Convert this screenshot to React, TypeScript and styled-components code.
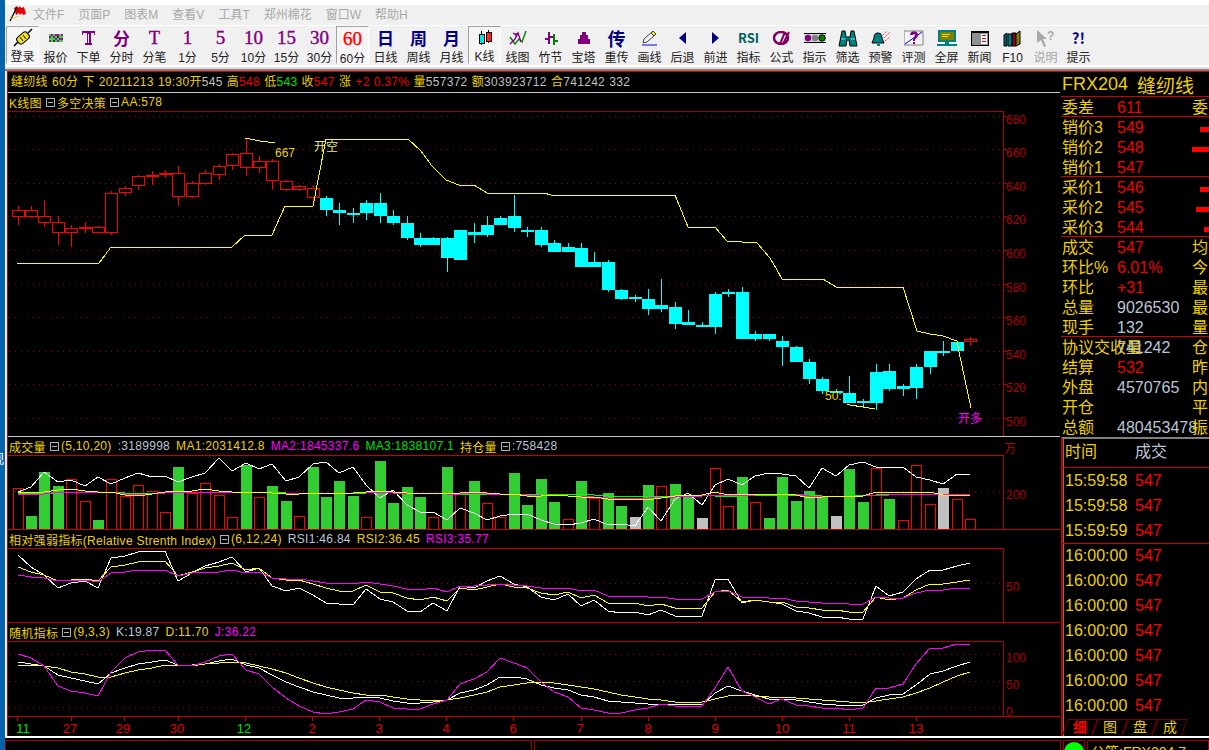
import React from 'react';
import styled, { createGlobalStyle } from 'styled-components';

const YELLOW = '#eed000';
const RED = '#f00000';
const DARK_RED = '#b00000';
const SILVER = '#b9c6d6';
const SANS = `"Liberation Sans", "Noto Sans CJK SC", sans-serif`;

const GlobalStyle = createGlobalStyle`
html, body { margin: 0; padding: 0; background: #0563ad; }
`;

const Page = styled.div`
display: flex;
width: 1209px;
height: 750px;
overflow: hidden;
font-family: ${SANS};
font-size: 12px;
`;

const Desktop = styled.div`
position: relative;
width: 5px;
flex: none;
overflow: hidden;
background: #0563ad;
`;

const DesktopGlyph = styled.span<{ $top: number }>`
position: absolute;
left: -9px;
top: ${p => p.$top}px;
color: #fff;
font-size: 13px;
`;

const Win = styled.div`
flex: 1;
min-width: 0;
display: flex;
flex-direction: column;
background: #f0f0f0;
border-top: 5px solid #fff;
`;

const MenuBar = styled.div`
box-sizing: border-box;
display: flex;
align-items: center;
height: 21px;
padding: 0 0 3px 4px;
gap: 14px;
border-bottom: 1px solid #fff;
`;

const Logo = styled.svg`
width: 18px;
height: 17px;
margin-right: -8px;
`;

const MenuItem = styled.span`
color: #a8a8a8;
white-space: nowrap;
`;

const Toolbar = styled.div`
display: flex;
height: 38px;
padding-left: 1px;
`;

const ToolButton = styled.div<{ $pressed?: boolean }>`
box-sizing: border-box;
width: 33px;
flex: none;
display: flex;
flex-direction: column;
align-items: center;
justify-content: space-between;
overflow: hidden;
${p => p.$pressed && `
border: 1px solid #fff;
border-top-color: #a0a0a0;
border-left-color: #a0a0a0;
background: repeating-conic-gradient(#fff 0 25%, #eeeeee 0 50%) 0 0 / 2px 2px;
`}
`;

const IconSlot = styled.div`
height: 24px;
display: flex;
align-items: center;
justify-content: center;
`;

const ToolGlyph = styled.span<{ $color: string; $serif?: boolean; $size: number }>`
color: ${p => p.$color};
font-family: ${p => (p.$serif ? `"Liberation Serif", serif` : `"Noto Sans CJK SC", sans-serif`)};
font-size: ${p => p.$size}px;
font-weight: ${p => (p.$serif ? 400 : 700)};
${p => p.$serif && `-webkit-text-stroke: 0.4px ${p.$color};`}
line-height: 24px;
white-space: nowrap;
`;

const ToolLabel = styled.span<{ $muted?: boolean }>`
height: 14px;
line-height: 16px;
white-space: nowrap;
color: ${p => (p.$muted ? '#a8a8a8' : '#222')};
`;

const Ruler = styled.div`
height: 7px;
background: linear-gradient(#f0f0f0 0 1px, #fff 1px 3px, #e0e0e0 3px 5px, #808080 5px 7px);
`;

const Body = styled.div`
display: flex;
height: 664px;
margin-left: 2px;
background: #000;
border-top: 1px solid #d00000;
`;

const ChartColumn = styled.div`
box-sizing: border-box;
width: 1054px;
flex: none;
display: flex;
flex-direction: column;
border-left: 1px solid #c00000;
letter-spacing: 0.3px;
`;

const QuoteBar = styled.div`
box-sizing: border-box;
height: 21px;
padding-left: 3px;
line-height: 20px;
white-space: pre;
word-spacing: 0.5px;
border-bottom: 1px solid #c8c8c8;
margin-right: 1px;
`;

const Tint = styled.span<{ $c: string }>`
color: ${p => p.$c};
`;

const IndicatorTitle = styled.div`
display: flex;
align-items: center;
height: 18px;
padding-left: 1px;
white-space: pre;
color: ${YELLOW};
position: relative;
`;

const Gap = styled.span`
width: 6px;
flex: none;
`;

const FoldBox = styled.span`
box-sizing: border-box;
display: inline-flex;
align-items: center;
justify-content: center;
width: 9px;
height: 9px;
margin: 0 2px 0 4px;
border: 1px solid #b0b0b0;
&::after {
  content: '';
  width: 5px;
  height: 1px;
  background: #b0b0b0;
}
`;

const WanLabel = styled.span`
position: absolute;
left: 996px;
top: 2px;
color: ${DARK_RED};
font-size: 12px;
`;

const ChartSvg = styled.svg`
display: block;
flex: none;
shape-rendering: crispEdges;
font-family: ${SANS};
font-size: 12px;
letter-spacing: 0;
`;

const XAxis = styled.div`
position: relative;
height: 18px;
font-size: 13px;
letter-spacing: 0;
`;

const XTick = styled.span<{ $x: number; $green?: boolean }>`
position: absolute;
left: ${p => p.$x - 8}px;
top: 4px;
transform: translateX(-50%);
color: ${p => (p.$green ? '#00e000' : '#e00000')};
`;

const TickMarks = styled.svg`
position: absolute;
left: 0;
top: 0;
shape-rendering: crispEdges;
`;

const SidePanel = styled.div`
flex: 1;
min-width: 0;
display: flex;
flex-direction: column;
`;

const SideHead = styled.div`
box-sizing: border-box;
height: 25px;
padding-left: 1px;
display: flex;
align-items: center;
gap: 9px;
color: ${YELLOW};
font-size: 18px;
white-space: nowrap;
border-bottom: 1px solid #d00000;
`;

const SideHeadName = styled.span`
font-size: 19px;
`;

const RowGroup = styled.div`
box-shadow: inset 0 -1px 0 #d00000;
`;

const QuoteRow = styled.div`
display: grid;
grid-template-columns: 55px 75px 1fr;
height: 20px;
padding-left: 1px;
line-height: 22px;
font-size: 16px;
white-space: nowrap;
overflow: visible;
`;

const QuoteLabel = styled.span`
color: ${YELLOW};
`;

const QuoteValue = styled.span<{ $silver?: boolean }>`
color: ${p => (p.$silver ? SILVER : RED)};
`;

const DepthCell = styled.span`
display: flex;
justify-content: flex-end;
align-items: center;
`;

const DepthBar = styled.i<{ $w: number }>`
display: block;
width: ${p => p.$w}px;
height: 5px;
margin-top: 2px;
background: #ff0000;
`;

const Trades = styled.div`
flex: 1;
min-height: 0;
display: flex;
flex-direction: column;
border-top: 2px solid #808080;
border-left: 2px solid #c00000;
box-shadow: inset 1px 0 0 #707070;
`;

const TradesHead = styled.div`
display: grid;
grid-template-columns: 70px 1fr;
height: 28px;
line-height: 26px;
padding-left: 2px;
font-size: 16px;
border-bottom: 1px solid #d00000;
flex: none;
`;

const TradeGroup = styled.div<{ $line?: boolean }>`
border-bottom: ${p => (p.$line ? '1px solid #d00000' : 'none')};
margin-bottom: ${p => (p.$line ? '-1px' : '0')};
flex: none;
`;

const TradeRow = styled.div`
display: grid;
grid-template-columns: 70px 1fr;
height: 25px;
line-height: 25px;
padding-left: 2px;
font-size: 16px;
`;

const TabStrip = styled.div`
display: flex;
margin-top: auto;
height: 17px;
padding-left: 2px;
flex: none;
`;

const Tab = styled.div<{ $on?: boolean }>`
position: relative;
width: 30px;
height: 16px;
text-align: center;
line-height: 16px;
font-size: 14px;
font-weight: ${p => (p.$on ? 700 : 400)};
color: ${p => (p.$on ? '#ff0000' : YELLOW)};
&::before {
  content: '';
  position: absolute;
  inset: 0 0 0 0;
  border: 1px solid #700000;
  border-bottom: none;
  transform: skewX(-20deg);
}
`;

const WhiteRule = styled.div`
height: 2px;
background: #fff;
`;

const StatusBar = styled.div`
flex: 1;
display: flex;
gap: 2px;
padding: 2px 0 0 0;
background: #000;
overflow: hidden;
`;

const StatusCell = styled.div<{ $w?: number }>`
box-sizing: border-box;
width: ${p => (p.$w ? `${p.$w}px` : 'auto')};
flex: ${p => (p.$w ? 'none' : 1)};
height: 20px;
border: 1px solid #a00000;
color: ${YELLOW};
font-size: 14px;
line-height: 22px;
white-space: nowrap;
display: flex;
justify-content: flex-start;
padding-left: 3px;
`;

const GreenDot = styled.span`
width: 20px;
height: 20px;
margin: 1px 0 0 -3px;
border-radius: 50%;
background: #00ff00;
flex: none;
`;

/* chart data, page pixels: top, bottom, wick top, wick bottom */
const CANDLES: number[][] = [
  [210, 216, 206, 225], [210, 216, 206, 218], [216, 222, 200, 227], [222, 232, 216, 245],
  [228, 232, 225, 247], [227, 227, 222, 233], [227, 232, 226, 233], [193, 232, 191, 235],
  [188, 192, 186, 196], [176, 185, 175, 190], [175, 175, 171, 185], [173, 174, 170, 178],
  [173, 196, 166, 206], [183, 196, 181, 198], [173, 183, 170, 185], [166, 174, 164, 180],
  [154, 165, 153, 170], [153, 167, 138, 176], [161, 167, 156, 173], [161, 180, 159, 190],
  [181, 189, 180, 191], [186, 189, 185, 191], [188, 197, 185, 205], [198, 210, 196, 216],
  [210, 213, 203, 225], [213, 215, 208, 223], [203, 213, 200, 220], [203, 216, 193, 223],
  [216, 223, 210, 225], [223, 238, 216, 240], [238, 245, 233, 247], [238, 245, 237, 245],
  [238, 258, 237, 272], [230, 260, 230, 260], [232, 235, 223, 243], [225, 235, 216, 237],
  [218, 225, 216, 225], [216, 228, 195, 232], [230, 232, 227, 237], [230, 245, 227, 247],
  [243, 252, 240, 252], [247, 252, 243, 252], [248, 267, 243, 267], [262, 267, 252, 267],
  [262, 290, 260, 292], [290, 299, 289, 300], [297, 298, 295, 302], [299, 309, 289, 315],
  [305, 309, 279, 312], [307, 324, 302, 329], [322, 325, 310, 325], [325, 326, 322, 327],
  [294, 327, 292, 334], [292, 294, 289, 297], [292, 339, 287, 339], [334, 339, 331, 341],
  [334, 339, 334, 341], [341, 347, 336, 366], [347, 362, 346, 362], [362, 379, 359, 384],
  [379, 391, 377, 394], [391, 392, 389, 392], [393, 403, 376, 403], [401, 403, 399, 408],
  [372, 403, 364, 410], [371, 389, 364, 391], [386, 389, 384, 396], [367, 388, 364, 399],
  [351, 367, 351, 374], [351, 352, 341, 356], [342, 351, 342, 351], [339, 341, 337, 346],
];

const STOP_LINE = '17,263 99,263 111,247 232,247 245,235 272,235 285,206 313,206 326,139 408,139 421,151 432,166 446,180 459,185 474,185 487,193 544,193 551,195 675,195 688,227 715,227 727,241 757,243 770,258 777,270 782,279 823,279 836,287 903,287 917,331 930,334 943,336 957,341 959,352 971,408';
const STOP_TOP = '245,138 260,141 275,143';
const STOP_LOW = '847,404 850,405 863,407 875,409';

// bar tops as read off the picture at 3x, bottom edge is 283
const VOLUME: [number, 'r' | 'g' | 's'][] = [
  [160, 'r'], [243, 'g'], [111, 'g'], [153, 'g'], [133, 'r'], [199, 'r'], [255, 'g'], [133, 'r'], [183, 'r'],
  [151, 'r'], [169, 'r'], [232, 'r'], [96, 'g'], [175, 'r'], [145, 'r'], [181, 'r'], [247, 'r'], [90, 'g'],
  [187, 'r'], [153, 'g'], [198, 'g'], [244, 'r'], [96, 'g'], [186, 'g'], [138, 'g'], [183, 'g'], [247, 'r'],
  [78, 'g'], [204, 'g'], [156, 'g'], [186, 'g'], [247, 'r'], [96, 'g'], [178, 'r'], [138, 'g'], [205, 'r'],
  [247, 'r'], [114, 'g'], [210, 'g'], [132, 'g'], [201, 'g'], [253, 'r'], [138, 'g'], [190, 'r'], [174, 'g'],
  [213, 'g'], [246, 's'], [150, 'g'], [154, 'r'], [147, 'g'], [187, 'g'], [249, 's'], [100, 'r'], [214, 'r'],
  [126, 'g'], [202, 'r'], [249, 'g'], [126, 'g'], [198, 'g'], [168, 'g'], [186, 'g'], [243, 's'], [102, 'g'],
  [201, 'g'], [100, 'r'], [192, 'g'], [256, 'r'], [91, 'r'], [208, 'r'], [159, 's'], [193, 'r'], [253, 'r'],
];

const VOL_WHITE = [172, 155, 111, 140, 136, 153, 125, 148, 128, 115, 127, 122, 142, 127, 113, 70, 108, 83, 103, 88, 138, 125, 88, 80, 115, 95, 150, 190, 166, 210, 232, 232, 256, 220, 235, 256, 243, 237, 237, 256, 267, 271, 263, 253, 271, 268, 274, 217, 259, 193, 175, 211, 150, 132, 151, 123, 114, 117, 123, 160, 100, 124, 89, 82, 97, 97, 97, 127, 135, 146, 117, 118];
const VOL_MA1 = [172, 172, 172, 165, 162, 167, 172, 172, 180, 183, 178, 172, 167, 167, 163, 167, 170, 170, 172, 175, 176, 176, 175, 175, 174, 174, 172, 168, 172, 175, 175, 175, 178, 175, 170, 175, 176, 176, 184, 184, 181, 184, 186, 187, 192, 193, 193, 196, 188, 184, 180, 179, 170, 181, 176, 178, 180, 178, 181, 189, 187, 182, 182, 182, 170, 170, 172, 170, 170, 181, 181, 181];
const VOL_MA2 = [176, 176, 176, 172, 171, 171, 170, 170, 176, 178, 177, 174, 170, 172, 174, 172, 170, 170, 172, 174, 174, 174, 174, 174, 174, 174, 172, 172, 174, 175, 175, 175, 176, 176, 174, 176, 177, 178, 180, 180, 180, 182, 184, 186, 188, 188, 188, 188, 186, 186, 184, 182, 180, 180, 179, 179, 178, 176, 178, 182, 182, 182, 182, 182, 180, 179, 178, 177, 176, 176, 176, 176];
const VOL_MA3 = [176, 175, 175, 173, 172, 172, 172, 172, 174, 175, 175, 174, 171, 171, 170, 170, 170, 170, 170, 172, 173, 174, 174, 174, 174, 174, 173, 172, 173, 174, 175, 175, 176, 176, 176, 177, 177, 178, 178, 178, 176, 177, 178, 181, 183, 183, 184, 183, 183, 182, 182, 181, 182, 182, 182, 180, 180, 180, 181, 181, 182, 182, 182, 181, 179, 178, 176, 176, 177, 178, 178, 178];

const RSI1 = [30, 67, 90, 130, 115, 108, 128, 40, 33, 22, 19, 19, 108, 85, 62, 50, 37, 80, 70, 123, 139, 130, 150, 175, 178, 181, 133, 162, 172, 197, 202, 175, 198, 122, 130, 108, 94, 118, 125, 157, 165, 147, 184, 165, 198, 205, 200, 210, 196, 214, 214, 214, 105, 102, 175, 166, 172, 178, 197, 205, 217, 217, 223, 223, 124, 152, 142, 103, 76, 76, 62, 55];
const RSI2 = [67, 82, 90, 108, 105, 102, 108, 65, 60, 52, 49, 49, 92, 82, 70, 63, 55, 75, 70, 98, 105, 105, 118, 130, 138, 139, 120, 140, 145, 158, 165, 155, 169, 128, 135, 125, 118, 125, 128, 145, 151, 142, 160, 151, 175, 178, 175, 183, 178, 190, 190, 190, 140, 136, 172, 166, 170, 172, 185, 190, 196, 196, 202, 202, 155, 165, 160, 135, 118, 118, 110, 106];
const RSI3 = [91, 97, 98, 108, 105, 105, 110, 85, 82, 76, 76, 76, 92, 85, 82, 80, 74, 85, 82, 100, 102, 102, 107, 115, 115, 118, 110, 118, 122, 132, 136, 130, 142, 122, 124, 120, 116, 120, 122, 130, 133, 130, 138, 136, 152, 155, 152, 157, 155, 163, 163, 163, 140, 138, 157, 155, 158, 160, 168, 172, 175, 175, 178, 178, 155, 160, 158, 145, 136, 135, 130, 130];

const KDJ_K = [352, 356, 362, 390, 400, 408, 418, 385, 368, 357, 350, 346, 360, 362, 358, 348, 343, 360, 370, 390, 410, 425, 440, 450, 458, 460, 456, 458, 468, 474, 474, 472, 466, 445, 436, 420, 397, 397, 402, 420, 428, 435, 450, 457, 467, 472, 475, 476, 476, 476, 477, 481, 445, 424, 438, 450, 463, 462, 466, 470, 476, 480, 482, 480, 458, 450, 446, 420, 387, 378, 362, 352];
const KDJ_D = [364, 360, 362, 370, 380, 388, 397, 395, 385, 375, 368, 361, 361, 360, 358, 353, 350, 355, 362, 372, 385, 400, 414, 425, 435, 445, 449, 451, 455, 463, 466, 467, 465, 458, 449, 440, 427, 420, 414, 411, 415, 420, 425, 433, 442, 450, 455, 463, 466, 470, 470, 472, 462, 454, 451, 452, 455, 456, 459, 462, 466, 469, 471, 473, 469, 462, 457, 445, 428, 412, 394, 380];
const KDJ_J = [328, 338, 362, 422, 438, 443, 453, 380, 338, 320, 316, 316, 360, 362, 350, 333, 328, 375, 387, 425, 460, 482, 500, 506, 500, 493, 466, 472, 488, 493, 493, 476, 466, 417, 403, 380, 340, 353, 370, 410, 440, 457, 490, 496, 505, 505, 495, 490, 478, 482, 484, 484, 428, 367, 438, 455, 478, 462, 480, 482, 490, 490, 494, 488, 430, 430, 418, 358, 310, 310, 298, 298];

const barX = (i: number) => Math.round(17.5 + 13.415 * i);
const points = (ys: number[], base: number) =>
  ys.map((y, i) => `${barX(i)},${Math.round(base + y / 3)}`).join(' ');

const X_TICKS: [string, number, boolean?][] = [
  ['11', 23, true], ['27', 70], ['29', 123], ['30', 177], ['12', 244, true], ['2', 312], ['3', 379], ['4', 446],
  ['6', 513], ['7', 580], ['8', 648], ['9', 715], ['10', 782], ['11', 849], ['13', 916],
];
const X_MARKS = [17, 71, 124, 178, 245, 312, 379, 446, 513, 581, 648, 715, 782, 849, 916];

function PriceChart() {
  const grid = [116, 149, 183, 216, 250, 284, 317, 351, 384, 418];
  const labels = ['680', '660', '640', '620', '600', '580', '560', '540', '520', '500'];
  return (
    <ChartSvg viewBox="8 111 1053 326" width={1053} height={326}>
      <rect x={8} y={111} width={995} height={1} fill="#a00000" />
      <rect x={1003} y={111} width={1} height={325} fill={DARK_RED} />
      <rect x={8} y={436} width={1052} height={1} fill="#c8c8c8" />
      {grid.map((y, i) => (
        <g key={y}>
          <line x1={9} x2={1003} y1={y + 0.5} y2={y + 0.5} stroke="#a00000" strokeDasharray="1 5" />
          <rect x={1004} y={y} width={3} height={1} fill={DARK_RED} />
          <text x={1006} y={y + 8} fill={DARK_RED}>{labels[i]}</text>
        </g>
      ))}
      {CANDLES.map(([top, bottom, wickTop, wickBottom], i) => {
        const rising = i < 23 || i === 71;
        const c = barX(i);
        const color = rising ? '#ff0000' : '#00ffff';
        return (
          <g key={i}>
            <rect x={c} y={wickTop} width={1} height={wickBottom - wickTop} fill={color} />
            {rising ? (
              <rect x={c - 6 + 0.5} y={top + 0.5} width={12} height={Math.max(bottom - top, 1)} fill="#000" stroke={color} />
            ) : (
              <rect x={c - 6} y={top} width={13} height={Math.max(bottom - top, 2)} fill={color} />
            )}
          </g>
        );
      })}
      <polyline points={STOP_LINE} fill="none" stroke="#ffff00" />
      <polyline points={STOP_TOP} fill="none" stroke="#ffff00" />
      <polyline points={STOP_LOW} fill="none" stroke="#ffff00" />
      <text x={275} y={157} fill={YELLOW}>667</text>
      <text x={314} y={151} fill="#e8e890">开空</text>
      <text x={825} y={400} fill={YELLOW}>50:</text>
      <text x={958} y={423} fill="#ff00ff">开多</text>
    </ChartSvg>
  );
}

function VolumeChart() {
  return (
    <ChartSvg viewBox="8 455 1053 75" width={1053} height={75}>
      <line x1={9} x2={1003} y1={491.5} y2={491.5} stroke="#a00000" strokeDasharray="1 5" />
      {VOLUME.map(([t, kind], i) => {
        const top = Math.round(435 + t / 3);
        const x = barX(i) - 5;
        if (kind === 'r') {
          return <rect key={i} x={x + 0.5} y={top + 0.5} width={10} height={529 - top} fill="none" stroke="#ff0000" />;
        }
        return <rect key={i} x={x} y={top} width={11} height={529 - top} fill={kind === 'g' ? '#32cd32' : '#c0c0c0'} />;
      })}
      <polyline points={points(VOL_WHITE, 435)} fill="none" stroke="#fff" />
      <polyline points={points(VOL_MA3, 435)} fill="none" stroke="#00ff00" />
      <polyline points={points(VOL_MA2, 435)} fill="none" stroke="#ff00ff" />
      <polyline points={points(VOL_MA1, 435)} fill="none" stroke="#ffff00" />
      <rect x={8} y={455} width={995} height={1} fill="#c80000" />
      <rect x={1003} y={455} width={1} height={75} fill={DARK_RED} />
      <rect x={8} y={529} width={1052} height={1} fill="#c80000" />
      <text x={1006} y={499} fill={DARK_RED}>200</text>
    </ChartSvg>
  );
}

function RsiChart() {
  return (
    <ChartSvg viewBox="8 548 1053 75" width={1053} height={75}>
      <line x1={9} x2={1003} y1={583.5} y2={583.5} stroke="#a00000" strokeDasharray="1 5" />
      <polyline points={points(RSI1, 545)} fill="none" stroke="#fff" />
      <polyline points={points(RSI2, 545)} fill="none" stroke="#ffff00" />
      <polyline points={points(RSI3, 545)} fill="none" stroke="#ff00ff" />
      <rect x={8} y={548} width={995} height={1} fill="#c00000" />
      <rect x={1003} y={548} width={1} height={75} fill={DARK_RED} />
      <rect x={8} y={622} width={1052} height={1} fill="#c00000" />
      <text x={1006} y={591} fill={DARK_RED}>50</text>
    </ChartSvg>
  );
}

function KdjChart() {
  return (
    <ChartSvg viewBox="8 641 1053 76" width={1053} height={76}>
      {[654, 681, 707].map(y => (
        <line key={y} x1={9} x2={1003} y1={y + 0.5} y2={y + 0.5} stroke="#a00000" strokeDasharray="1 5" />
      ))}
      <polyline points={points(KDJ_K, 545)} fill="none" stroke="#fff" />
      <polyline points={points(KDJ_D, 545)} fill="none" stroke="#ffff00" />
      <polyline points={points(KDJ_J, 545)} fill="none" stroke="#ff00ff" />
      <rect x={8} y={641} width={995} height={1} fill="#c00000" />
      <rect x={1003} y={641} width={1} height={76} fill={DARK_RED} />
      <rect x={8} y={716} width={1052} height={1} fill="#c00000" />
      <text x={1006} y={662} fill={DARK_RED}>100</text>
      <text x={1006} y={689} fill={DARK_RED}>50</text>
      <text x={1006} y={716} fill={DARK_RED}>0</text>
    </ChartSvg>
  );
}

const Ico = ({ children, w = 22, h = 20 }: { children: React.ReactNode; w?: number; h?: number }) => (
  <svg width={w} height={h} viewBox={`0 0 ${w} ${h}`} shapeRendering="crispEdges">{children}</svg>
);

const MOSAIC = ['gmgmmgm', 'mgmgkgg', 'gggmgmm', 'mgkgmgg'];

const ICONS: Record<string, React.ReactNode> = {
  login: (
    <svg width={20} height={20} viewBox="0 0 20 20">
      <path d="M1 18l4-4M15 5l4-4" stroke="#000" strokeWidth={1.5} />
      <rect x={3.5} y={6} width={13} height={8} rx={3} transform="rotate(-40 10 10)" fill="#f0e020" stroke="#000" />
      <path d="M7 9l3 4M10 7l3 4" stroke="#000" />
    </svg>
  ),
  quote: (
    <Ico w={16} h={10}>
      {MOSAIC.map((row, y) => row.split('').map((v, x) => (
        <rect key={`${x}${y}`} x={x * 2 + 1} y={y * 2 + 1} width={2} height={2} fill={v === 'g' ? '#30e030' : v === 'm' ? '#b000b0' : '#203020'} />
      )))}
    </Ico>
  ),
  order: (
    <Ico w={16} h={16}>
      <path d="M1 1h13v4h-1V3H9.500v10H11v2H4v-2h1.500V3H2v2H1z" fill="#800080" />
      <rect x={7} y={4} width={1} height={9} fill="#f0f0f0" />
    </Ico>
  ),
  candle: (
    <Ico w={16} h={16}>
      <rect x={4} y={1} width={1} height={14} fill="#000" />
      <rect x={2} y={4} width={5} height={9} fill="#00e8e8" stroke="#000" />
      <rect x={11} y={0} width={1} height={13} fill="#000" />
      <rect x={9} y={2} width={5} height={9} fill="#ff2020" stroke="#000" />
    </Ico>
  ),
  lines: (
    <svg width={18} height={16} viewBox="0 0 18 16">
      <path d="M1 7l5 7 4-5 3 3 4-11" fill="none" stroke="#108010" strokeWidth={1.5} />
      <path d="M1 14l5-5 3-6 3 9M4 3l3 2 3-2M7 3v4" fill="none" stroke="#800080" strokeWidth={1.3} />
    </svg>
  ),
  bamboo: (
    <Ico w={16} h={14}>
      <rect x={5} y={1} width={2} height={12} fill="#800080" />
      <rect x={2} y={7} width={3} height={2} fill="#800080" />
      <rect x={10} y={3} width={2} height={11} fill="#008000" />
      <rect x={12} y={9} width={3} height={2} fill="#008000" />
      <rect x={7} y={5} width={3} height={2} fill="#800080" />
    </Ico>
  ),
  tower: (
    <Ico w={14} h={13}>
      <rect x={5} y={0} width={4} height={3} fill="#800080" />
      <rect x={3} y={3} width={8} height={4} fill="#800080" />
      <rect x={1} y={7} width={12} height={5} fill="#800080" />
    </Ico>
  ),
  pencil: (
    <svg width={16} height={16} viewBox="0 0 16 16">
      <path d="M11 1l3 3-9 8-4 1 1-4z" fill="#f0f0f0" stroke="#444" />
      <path d="M11 1l3 3-2 2-3-3z" fill="#f0e020" stroke="#444" />
      <path d="M0 15h15" stroke="#0000e0" />
    </svg>
  ),
  back: (
    <svg width={9} height={12} viewBox="0 0 9 12"><path d="M8 0v12L1 6z" fill="#000080" /></svg>
  ),
  forward: (
    <svg width={9} height={12} viewBox="0 0 9 12"><path d="M1 0v12l7-6z" fill="#000080" /></svg>
  ),
  formula: (
    <svg width={18} height={14} viewBox="0 0 18 14">
      <ellipse cx={8} cy={7} rx={7} ry={6} fill="none" stroke="#800060" strokeWidth={2.5} />
      <path d="M7 13L12 1M10 13l6-12" stroke="#800060" strokeWidth={2} />
    </svg>
  ),
  lights: (
    <svg width={22} height={12} viewBox="0 0 22 12">
      <rect x={0} y={1} width={22} height={10} fill="#d8d8d8" />
      <rect x={0} y={1} width={22} height={1} fill="#000" />
      <rect x={0} y={10} width={22} height={1} fill="#000" />
      <circle cx={4} cy={6} r={3.200} fill="#800080" />
      <circle cx={11} cy={6} r={3.200} fill="#808080" />
      <circle cx={18} cy={6} r={3.200} fill="#008000" stroke="#000" />
    </svg>
  ),
  binoculars: (
    <svg width={20} height={17} viewBox="0 0 20 17">
      <path d="M4 1h3l1 6h4l1-6h3l3 15h-7l-1-6H9l-1 6H1z" fill="#008080" stroke="#000" />
      <path d="M3 9h4M13 9h4" stroke="#80e0e0" />
    </svg>
  ),
  bell: (
    <svg width={20} height={17} viewBox="0 0 20 17">
      <path d="M7 3c3 0 4 2 4 5l2 5H1l2-5c0-3 1-5 4-5z" fill="#008080" stroke="#000" />
      <path d="M6 14h3v2H6z" fill="#008080" />
      <path d="M12 5l4-4M13 8l6-6M14 11l5-4" stroke="#ff4040" strokeDasharray="2 1" />
    </svg>
  ),
  review: (
    <svg width={20} height={16} viewBox="0 0 20 16">
      <path d="M0 1h19v14H0z" fill="#f4f4f4" stroke="#808080" />
      <path d="M1 14L18 2" stroke="#0000e0" />
      <path d="M6 5c0-5 8-5 8 0 0 3-3 3-3 6H9c0-4 2-4 2-6 0-1-2-1-2 0z" fill="#800080" />
      <rect x={9} y={12} width={2} height={2} fill="#800080" />
    </svg>
  ),
  screen: (
    <Ico w={20} h={16}>
      <rect x={1} y={0} width={18} height={12} fill="#008080" />
      <rect x={3} y={2} width={14} height={8} fill="#808000" />
      <rect x={5} y={4} width={8} height={1} fill="#e0e000" />
      <rect x={5} y={6} width={6} height={1} fill="#e0e000" />
      <rect x={0} y={14} width={20} height={2} fill="#008080" />
      <rect x={8} y={12} width={4} height={2} fill="#008080" />
    </Ico>
  ),
  news: (
    <Ico w={19} h={15}>
      <rect x={1} y={0} width={17} height={14} fill="#909090" stroke="#000" />
      <rect x={1} y={0} width={17} height={2} fill="#000" />
      <rect x={11} y={3} width={6} height={10} fill="#fff" />
      <rect x={12} y={4} width={4} height={1} fill="#e00000" />
      <rect x={12} y={7} width={4} height={1} fill="#e00000" />
      <rect x={12} y={10} width={4} height={1} fill="#e00000" />
    </Ico>
  ),
  books: (
    <svg width={19} height={17} viewBox="0 0 19 17">
      <path d="M1 5l3-2v13H1z" fill="#006080" stroke="#000" />
      <path d="M5 4h4v12H5z" fill="#008080" stroke="#000" />
      <path d="M9 3h4v13H9z" fill="#800020" stroke="#000" />
      <path d="M13 4l4-3v13l-4 2z" fill="#808000" stroke="#000" />
    </svg>
  ),
  whatsthis: (
    <svg width={20} height={17} viewBox="0 0 20 17">
      <path d="M1 0l10 9H7l3 7-2 1-3-7-4 3z" fill="#a8a8a8" />
      <text x={11} y={10} fontSize={12} fontWeight={700} fill="#a8a8a8" fontFamily="Liberation Sans">?</text>
    </svg>
  ),
};

type Tool = { label: string; icon?: string; glyph?: string; color?: string; serif?: boolean; size?: number; pressed?: boolean; muted?: boolean };
const PURPLE = '#800080';
const NAVY = '#000080';

const TOOLS: Tool[] = [
  { label: '登录', icon: 'login', pressed: true },
  { label: '报价', icon: 'quote' },
  { label: '下单', icon: 'order' },
  { label: '分时', glyph: '分', color: PURPLE, size: 17 },
  { label: '分笔', glyph: 'T', color: PURPLE, serif: true, size: 18 },
  { label: '1分', glyph: '1', color: PURPLE, serif: true, size: 19 },
  { label: '5分', glyph: '5', color: PURPLE, serif: true, size: 19 },
  { label: '10分', glyph: '10', color: PURPLE, serif: true, size: 19 },
  { label: '15分', glyph: '15', color: PURPLE, serif: true, size: 19 },
  { label: '30分', glyph: '30', color: PURPLE, serif: true, size: 19 },
  { label: '60分', glyph: '60', color: '#ff0000', serif: true, size: 19, pressed: true },
  { label: '日线', glyph: '日', color: NAVY, size: 17 },
  { label: '周线', glyph: '周', color: NAVY, size: 17 },
  { label: '月线', glyph: '月', color: NAVY, size: 17 },
  { label: 'K线', icon: 'candle', pressed: true },
  { label: '线图', icon: 'lines' },
  { label: '竹节', icon: 'bamboo' },
  { label: '宝塔', icon: 'tower' },
  { label: '重传', glyph: '传', color: NAVY, size: 18 },
  { label: '画线', icon: 'pencil' },
  { label: '后退', icon: 'back' },
  { label: '前进', icon: 'forward' },
  { label: '指标', glyph: 'RSI', color: '#006060', size: 13 },
  { label: '公式', icon: 'formula' },
  { label: '指示', icon: 'lights' },
  { label: '筛选', icon: 'binoculars' },
  { label: '预警', icon: 'bell' },
  { label: '评测', icon: 'review' },
  { label: '全屏', icon: 'screen' },
  { label: '新闻', icon: 'news' },
  { label: 'F10', icon: 'books' },
  { label: '说明', icon: 'whatsthis', muted: true },
  { label: '提示', glyph: '?!', color: NAVY, size: 15 },
];

const MENUS = ['文件F', '页面P', '图表M', '查看V', '工具T', '郑州棉花', '窗口W', '帮助H'];

type Q = { l: string; v?: string; silver?: boolean; r?: string; bar?: number };
const GROUPS: Q[][] = [
  [{ l: '委差', v: '611', r: '委' }],
  [{ l: '销价3', v: '549', bar: 9 }, { l: '销价2', v: '548', bar: 18 }, { l: '销价1', v: '547' }],
  [{ l: '采价1', v: '546', bar: 9 }, { l: '采价2', v: '545', bar: 13 }, { l: '采价3', v: '544', bar: 5 }],
  [
    { l: '成交', v: '547', r: '均' }, { l: '环比%', v: '6.01%', r: '今' }, { l: '环比', v: '+31', r: '最' },
    { l: '总量', v: '9026530', silver: true, r: '最' }, { l: '现手', v: '132', silver: true, r: '量' },
  ],
];
const LOWER: Q[] = [
  { l: '协议交收量', v: '741242', silver: true, r: '仓' }, { l: '结算', v: '532', r: '昨' },
  { l: '外盘', v: '4570765', silver: true, r: '内' }, { l: '开仓', r: '平' },
  { l: '总额', v: '480453478', silver: true, r: '振' },
];

function Quote({ q }: { q: Q }) {
  return (
    <QuoteRow>
      <QuoteLabel>{q.l}</QuoteLabel>
      <QuoteValue $silver={q.silver}>{q.v}</QuoteValue>
      {q.bar ? <DepthCell><DepthBar $w={q.bar} /></DepthCell> : <QuoteLabel>{q.r}</QuoteLabel>}
    </QuoteRow>
  );
}

const Trade = ({ t }: { t: string }) => (
  <TradeRow>
    <Tint $c={YELLOW}>{t}</Tint>
    <Tint $c="#ff0000">547</Tint>
  </TradeRow>
);

export default function App() {
  return (
    <Page>
      <GlobalStyle />
      <Desktop>
        <DesktopGlyph $top={43}>A</DesktopGlyph>
        <DesktopGlyph $top={448}>观</DesktopGlyph>
        <DesktopGlyph $top={549}>讠</DesktopGlyph>
        <DesktopGlyph $top={649}>讠</DesktopGlyph>
      </Desktop>
      <Win>
        <MenuBar>
          <Logo viewBox="0 0 18 17">
            <path d="M5 3l3-2 1 2 2-2 1 2 3-1 2 7-3 1-1-2-2 2-1-2-3 2z" fill="#e00000" />
            <path d="M1 16L8 2" stroke="#000" strokeWidth={1.3} />
            <path d="M2 14l8-3M1 12l3-1" stroke="#e0c000" strokeDasharray="2 1" />
          </Logo>
          {MENUS.map(m => <MenuItem key={m}>{m}</MenuItem>)}
        </MenuBar>
        <Toolbar>
          {TOOLS.map(t => (
            <ToolButton key={t.label} $pressed={t.pressed}>
              <IconSlot>
                {t.icon ? ICONS[t.icon] : (
                  <ToolGlyph $color={t.color!} $serif={t.serif} $size={t.size!}>{t.glyph}</ToolGlyph>
                )}
              </IconSlot>
              <ToolLabel $muted={t.muted}>{t.label}</ToolLabel>
            </ToolButton>
          ))}
        </Toolbar>
        <Ruler />
        <Body>
          <ChartColumn>
            <QuoteBar>
              <Tint $c={YELLOW}>缝纫线 60分 下 20211213 19:30开</Tint>
              <Tint $c="#c0c0c0">545 </Tint>
              <Tint $c={YELLOW}>高</Tint><Tint $c={RED}>548 </Tint>
              <Tint $c={YELLOW}>低</Tint><Tint $c="#00e000">543 </Tint>
              <Tint $c={YELLOW}>收</Tint><Tint $c={RED}>547 </Tint>
              <Tint $c={YELLOW}>涨 </Tint><Tint $c={RED}>+2 0.37% </Tint>
              <Tint $c={YELLOW}>量</Tint><Tint $c="#c0c0c0">557372 </Tint>
              <Tint $c={YELLOW}>额</Tint><Tint $c="#c0c0c0">303923712 </Tint>
              <Tint $c={YELLOW}>合</Tint><Tint $c="#c0c0c0">741242 332</Tint>
            </QuoteBar>
            <IndicatorTitle>K线图<FoldBox />多空决策<FoldBox />AA:578</IndicatorTitle>
            <PriceChart />
            <IndicatorTitle>
              成交量<FoldBox />(5,10,20)<Gap /><Tint $c={SILVER}>:3189998</Tint><Gap />
              MA1:2031412.8<Gap /><Tint $c="#ff00ff">MA2:1845337.6</Tint><Gap />
              <Tint $c="#00e000">MA3:1838107.1</Tint><Gap />持仓量<FoldBox /><Tint $c={SILVER}>:758428</Tint>
              <WanLabel>万</WanLabel>
            </IndicatorTitle>
            <VolumeChart />
            <IndicatorTitle>
              相对强弱指标(Relative Strenth Index)<FoldBox />(6,12,24)<Gap /><Tint $c={SILVER}>RSI1:46.84</Tint><Gap />
              RSI2:36.45<Gap /><Tint $c="#ff00ff">RSI3:35.77</Tint>
            </IndicatorTitle>
            <RsiChart />
            <IndicatorTitle>
              随机指标<FoldBox />(9,3,3)<Gap /><Tint $c={SILVER}>K:19.87</Tint><Gap />D:11.70<Gap /><Tint $c="#ff00ff">J:36.22</Tint>
            </IndicatorTitle>
            <KdjChart />
            <XAxis>
              <TickMarks width={1053} height={5}>
                {X_MARKS.map(x => <rect key={x} x={x - 8} y={0} width={1} height={4} fill="#c00000" />)}
              </TickMarks>
              {X_TICKS.map(([t, x, g]) => <XTick key={`${t}${x}`} $x={x} $green={g}>{t}</XTick>)}
            </XAxis>
          </ChartColumn>
          <SidePanel>
            <SideHead><span>FRX204</span><SideHeadName>缝纫线</SideHeadName></SideHead>
            {GROUPS.map((g, i) => (
              <RowGroup key={i}>{g.map(q => <Quote key={q.l} q={q} />)}</RowGroup>
            ))}
            <div>{LOWER.map(q => <Quote key={q.l} q={q} />)}</div>
            <Trades>
              <TradesHead><Tint $c={YELLOW}>时间</Tint><Tint $c={SILVER}>成交</Tint></TradesHead>
              <TradeGroup $line>
                <Trade t="15:59:58" /><Trade t="15:59:58" /><Trade t="15:59:59" />
              </TradeGroup>
              <TradeGroup>
                {[0, 1, 2, 3, 4, 5, 6].map(i => <Trade key={i} t="16:00:00" />)}
              </TradeGroup>
              <TabStrip>
                <Tab $on>细</Tab><Tab>图</Tab><Tab>盘</Tab><Tab>成</Tab>
              </TabStrip>
            </Trades>
          </SidePanel>
        </Body>
        <WhiteRule />
        <StatusBar>
          <StatusCell $w={527} />
          <StatusCell $w={527} />
          <StatusCell $w={22}><GreenDot /></StatusCell>
          <StatusCell>公等:FRX204.7</StatusCell>
        </StatusBar>
      </Win>
    </Page>
  );
}
